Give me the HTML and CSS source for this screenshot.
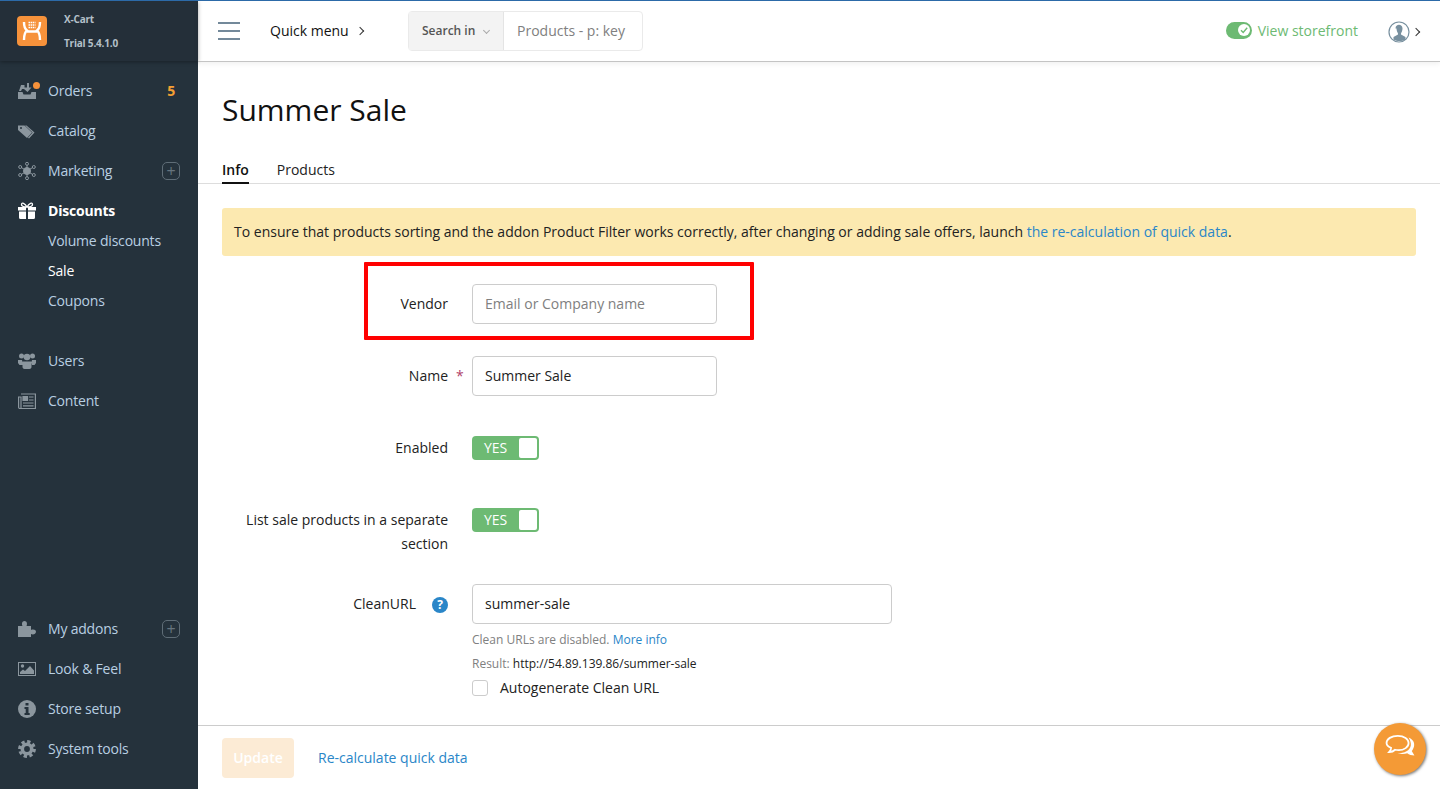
FILE: index.html
```html
<!DOCTYPE html>
<html lang="en">
<head>
<meta charset="UTF-8" />
<title>Summer Sale - X-Cart</title>
<link rel="stylesheet" href="styles.css">
</head>
<body>

<!-- Sidebar -->
<aside class="sidebar">
  <div class="brand">
    <div class="brand-logo">
      <svg width="20" height="20" viewBox="0 0 20 20" fill="none" stroke="#fff" stroke-width="2.400">
        <path d="M2 1c0 5 1 7 3 8.500c-2 1.500-3 3.500-3 9.500M18 1c0 5-1 7-3 8.500c2 1.500 3 3.500 3 9.500M5 10.500h10"/>
        <path d="M6.500 1.500h7M6.500 4h7M6.500 6.500h7" stroke-width="1.500" stroke-dasharray="1.500 .6"/>
      </svg>
    </div>
    <div class="brand-text">
      <div>X-Cart</div>
      <div>Trial 5.4.1.0</div>
    </div>
  </div>

  <nav class="nav">
    <a class="nav-item">
      <svg class="nav-icon" viewBox="0 0 18 18" fill="#8b969e"><path d="M0 10h4.500l1 2.500h7l1-2.500H18v7H0z"/><path d="M1 9l2-6h3.500v2.500H9V1h2v4.500h2.500L9.500 10 6 7H4L3 9z"/></svg>
      <span class="order-dot"></span>
      <span class="nav-label">Orders</span>
      <span class="nav-count">5</span>
    </a>
    <a class="nav-item">
      <svg class="nav-icon" viewBox="0 0 18 18" fill="#8b969e"><path d="M0 3.500h6.500L14 10.500l-5 5.500L0 8z"/><path d="M8.500 3.500L16.500 10.500 11 16.500l-1-.8 4.600-5.200L7 3.500z" /><circle cx="3" cy="6" r="1" fill="#25323c"/></svg>
      <span class="nav-label">Catalog</span>
    </a>
    <a class="nav-item">
      <svg class="nav-icon" viewBox="0 0 18 18" fill="none" stroke="#8b969e" stroke-width="1"><circle cx="9" cy="9" r="3.500" fill="#8b969e"/><path d="M9 2v14M2.500 5l13 8M15.500 5l-13 8"/><g fill="#25323c"><circle cx="9" cy="1.800" r="1.500"/><circle cx="9" cy="16.200" r="1.500"/><circle cx="2.200" cy="5" r="1.500"/><circle cx="15.800" cy="5" r="1.500"/><circle cx="2.200" cy="13" r="1.500"/><circle cx="15.800" cy="13" r="1.500"/></g></svg>
      <span class="nav-label">Marketing</span>
      <span class="nav-plus">+</span>
    </a>
    <a class="nav-item nav-item-active">
      <svg class="nav-icon" viewBox="0 0 18 18" fill="#fff"><path d="M0 5h8v3.500H0zM10 5h8v3.500h-8zM1 9.500h7V17H2.500A1.500 1.500 0 0 1 1 15.500zM10 9.500h7v6a1.500 1.500 0 0 1-1.500 1.500H10z"/><path d="M9 5C7 1 3.500 0 3.500 2.500S6 5 9 5C12 5 14.500 5 14.500 2.500S11 1 9 5z" fill="none" stroke="#fff" stroke-width="1.300"/></svg>
      <span class="nav-label">Discounts</span>
    </a>
    <a class="nav-sub">Volume discounts</a>
    <a class="nav-sub nav-sub-current">Sale</a>
    <a class="nav-sub">Coupons</a>
    <a class="nav-item nav-item-gap">
      <svg class="nav-icon" viewBox="0 0 18 18" fill="#8b969e"><circle cx="3.500" cy="4" r="2.500"/><circle cx="14.500" cy="4" r="2.500"/><circle cx="9" cy="5" r="3.300"/><path d="M0 8h4l1 5H1.500L0 11zM18 8h-4l-1 5h3.500L18 11zM4.500 9.500h9V15c0 1-1 2-2 2h-5c-1 0-2-1-2-2z"/></svg>
      <span class="nav-label">Users</span>
    </a>
    <a class="nav-item">
      <svg class="nav-icon" viewBox="0 0 18 18" fill="none" stroke="#8b969e" stroke-width="1.200"><path d="M3 2h14.400v14.500H2A1.400 1.400 0 0 1 .6 15V5H3v11"/><path d="M5 4.500h4.500v4H5z" fill="#8b969e"/><path d="M11 5h4.500M11 8h4.500M5 11h10.500M5 13.800h10.500"/></svg>
      <span class="nav-label">Content</span>
    </a>
  </nav>

  <nav class="nav nav-bottom">
    <a class="nav-item">
      <svg class="nav-icon" viewBox="0 0 18 18" fill="#8b969e"><path d="M0 6h4.500C3.500 4 4 1 6.500 1S9.500 4 8.500 6H13v4c2-1 5-.5 5 1.800S15 15 13 14v3H0z"/></svg>
      <span class="nav-label">My addons</span>
      <span class="nav-plus">+</span>
    </a>
    <a class="nav-item">
      <svg class="nav-icon" viewBox="0 0 18 18" fill="#8b969e"><path d="M0 2h18v14H0zM1 3v12h16V3z"/><circle cx="4.500" cy="6" r="1.700"/><path d="M2 14v-2l3-2.500 2 1.500 5-5 4 4.500V14z"/></svg>
      <span class="nav-label">Look &amp; Feel</span>
    </a>
    <a class="nav-item">
      <svg class="nav-icon" viewBox="0 0 18 18"><circle cx="9" cy="9" r="9" fill="#8b969e"/><path d="M7.500 3h3v2.500h-3zM6.500 7h4v6h1.200v2H6.500v-2h1.200V9H6.500z" fill="#25323c"/></svg>
      <span class="nav-label">Store setup</span>
    </a>
    <a class="nav-item">
      <svg class="nav-icon" viewBox="0 0 18 18" fill="none" stroke="#8b969e"><circle cx="9" cy="9" r="4.700" stroke-width="3.600"/><circle cx="9" cy="9" r="7.400" stroke-width="3" stroke-dasharray="3.300 2.500"/></svg>
      <span class="nav-label">System tools</span>
    </a>
  </nav>
</aside>

<div class="main">
  <!-- Top bar -->
  <header class="topbar">
    <div class="burger"><span></span><span></span><span></span></div>
    <span class="quick-menu">Quick menu<i class="chevron chevron-dark"></i></span>
    <div class="search">
      <div class="search-in">Search in<i class="chevron-down"></i></div>
      <div class="search-box">Products - p: key</div>
    </div>
    <div class="topbar-right">
      <span class="store-switch"><svg width="12" height="12" viewBox="0 0 12 12" fill="none" stroke="#6dba73" stroke-width="1.400"><path d="M3 6.200l2.200 2.200L9.200 3.800"/></svg></span>
      <a class="storefront">View storefront</a>
      <svg class="avatar" width="22" height="22" viewBox="0 0 22 22"><circle cx="11" cy="11" r="10" fill="#fff" stroke="#78909f" stroke-width="1.200"/><path d="M7.500 7.500c0-5 7-5 7 0c0 2-1 4-1.500 5v1l4.500 2.500v2.500c-3.500 2-8.500 2-12 0V16l4.500-2.500v-1c-.5-1-1.500-3-1.500-5z" fill="#78909f"/></svg>
      <i class="chevron chevron-dark"></i>
    </div>
  </header>

  <div class="content">
    <h1 class="page-title">Summer Sale</h1>
    <div class="tabs">
      <a class="tab tab-active">Info</a>
      <a class="tab">Products</a>
    </div>

    <div class="page-body">
      <div class="notice">To ensure that products sorting and the addon Product Filter works correctly, after changing or adding sale offers, launch <a class="link">the re-calculation of quick data</a>.</div>

      <form class="form">
        <div class="form-row form-row-marked">
          <span class="marker"></span>
          <label class="form-label">Vendor</label>
          <div class="input input-placeholder">Email or Company name</div>
        </div>
        <div class="form-row">
          <label class="form-label">Name<span class="required">*</span></label>
          <div class="input">Summer Sale</div>
        </div>
        <div class="form-row">
          <label class="form-label">Enabled</label>
          <div class="toggle"><span class="toggle-text">YES</span><span class="toggle-knob"></span></div>
        </div>
        <div class="form-row form-row-tall">
          <label class="form-label">List sale products in a separate section</label>
          <div class="toggle"><span class="toggle-text">YES</span><span class="toggle-knob"></span></div>
        </div>
        <div class="form-row form-row-last">
          <label class="form-label form-label-help">CleanURL<span class="help">?</span></label>
          <div class="url-field">
            <div class="input input-wide">summer-sale</div>
            <div class="hint hint-first">Clean URLs are disabled. <a class="link">More info</a></div>
            <div class="hint">Result: <span class="hint-url">http://54.89.139.86/summer-sale</span></div>
            <div class="check-row"><span class="checkbox"></span>Autogenerate Clean URL</div>
          </div>
        </div>
      </form>
    </div>
  </div>

  <footer class="footer">
    <button class="btn-update" type="button">Update</button>
    <a class="link footer-link">Re-calculate quick data</a>
  </footer>
</div>

<!-- Chat launcher -->
<div class="chat">
  <svg width="33" height="27" viewBox="0 0 36 30">
    <path d="M27 4c5 2 7 6 6 10c-.5 2-1.500 4-2.500 5l3 5c-3 0-6-1-8-2.500c-3 1-7 1-11 0c8 0 14-3 15-9c.3-3-1-6-2.500-8.500z" fill="#fff"/>
    <path d="M15 2c7 0 12 3.500 12 8s-5 8-11 8c-1.500 0-3-.2-4-.5c-1.500 1.500-4 2.500-6.500 2.500c1-1 2-2.500 2-4.500C4 14 2.500 12 2.500 10C2.500 5.500 8 2 15 2z" fill="#f49a36" stroke="#fff" stroke-width="2"/>
  </svg>
</div>

</body>
</html>
```

FILE: styles.css
```css
/* --- Reset & base --- */
* {
  box-sizing: border-box;
}
html, body {
  height: 100%;
}
body {
  margin: 0;
  display: flex;
  overflow: hidden;
  border-top: 1px solid #2c6aa8;
  font-family: "Open Sans", "Liberation Sans", sans-serif;
  font-size: 14px;
  line-height: 24px;
  color: #222;
  background: #fff;
}
.link {
  color: #2a86c8;
}

/* --- Sidebar --- */
.sidebar {
  width: 198px;
  flex: none;
  display: flex;
  flex-direction: column;
  background: #25323c;
  color: #b9cfe2;
  letter-spacing: -0.2px;
}
.brand {
  height: 60px;
  display: flex;
  align-items: center;
  gap: 17px;
  padding: 0 17px 0;
  background: #242f39;
  box-shadow: 0 1px 4px rgba(0, 0, 0, 0.35);
}
.brand-logo {
  width: 30px;
  height: 30px;
  display: flex;
  align-items: center;
  justify-content: center;
  border-radius: 4px;
  background: #f6923b;
}
.brand-text {
  font-size: 10px;
  font-weight: 700;
  line-height: 24px;
  color: #b4c0c9;
}
.nav {
  padding-top: 10px;
}
.nav-bottom {
  margin-top: auto;
  padding: 0 0 20px;
}
.nav-item {
  position: relative;
  height: 40px;
  display: flex;
  align-items: center;
  padding: 0 18px;
}
.nav-item-gap {
  margin-top: 25px;
}
.nav-item-active {
  margin-bottom: -5px;
  color: #fff;
  font-weight: 700;
}
.nav-icon {
  width: 18px;
  height: 18px;
  flex: none;
}
.nav-label {
  margin-left: 12px;
}
.order-dot {
  position: absolute;
  left: 33px;
  top: 11px;
  width: 7px;
  height: 7px;
  border-radius: 50%;
  background: #f6923b;
}
.nav-count {
  margin-left: auto;
  margin-right: 5px;
  font-weight: 700;
  color: #f5a033;
}
.nav-plus {
  margin-left: auto;
  width: 18px;
  height: 18px;
  display: flex;
  align-items: center;
  justify-content: center;
  border: 1px solid #5f6d77;
  border-radius: 5px;
  font-size: 16px;
  line-height: 1;
  color: #66747e;
}
.nav-sub {
  display: block;
  height: 30px;
  padding-left: 48px;
  line-height: 30px;
}
.nav-sub-current {
  color: #fff;
}

/* --- Main column --- */
.main {
  flex: 1;
  min-width: 0;
  display: flex;
  flex-direction: column;
}
.topbar {
  position: relative;
  height: 61px;
  flex: none;
  display: flex;
  align-items: center;
  padding-left: 20px;
  border-bottom: 1px solid #c4c4c4;
  box-shadow: 0 2px 5px rgba(0, 0, 0, 0.06);
}
.burger {
  width: 22px;
  display: flex;
  flex-direction: column;
  gap: 6px;
}
.burger span {
  height: 2px;
  background: #73899a;
}
.quick-menu {
  margin-left: 30px;
  width: 138px;
  display: flex;
  align-items: center;
  color: #111;
}
.chevron {
  width: 6px;
  height: 6px;
  margin-left: 8px;
  border-top: 1.200px solid #333;
  border-right: 1.200px solid #333;
  transform: rotate(45deg);
}
.search {
  width: 235px;
  height: 40px;
  display: flex;
  border: 1px solid #eaeaea;
  border-radius: 4px;
}
.search-in {
  width: 95px;
  display: flex;
  align-items: center;
  padding-left: 13px;
  background: #f3f3f3;
  border-right: 1px solid #e4e4e4;
  font-size: 12px;
  font-weight: 600;
  color: #555;
}
.chevron-down {
  width: 5px;
  height: 5px;
  margin: -2px 0 0 9px;
  border-right: 1px solid #aaa;
  border-bottom: 1px solid #aaa;
  transform: rotate(45deg);
}
.search-box {
  padding: 7px 13px;
  color: #808080;
}
.topbar-right {
  margin-left: auto;
  padding-right: 21px;
  display: flex;
  align-items: center;
}
.store-switch {
  width: 26px;
  height: 17px;
  display: flex;
  align-items: center;
  justify-content: flex-end;
  padding-right: 2px;
  margin-top: -2px;
  border-radius: 9px;
  background: #6dba73;
}
.store-switch svg {
  background: #fff;
  border-radius: 50%;
}
.storefront {
  margin: 0 0 0 6px;
  color: #6dba73;
}
.avatar {
  margin: 2px 0 0 30px;
}
.topbar-right .chevron {
  margin: 2px 0 0 3px;
}

/* --- Content --- */
.content {
  flex: 1;
  min-height: 0;
}
.page-title {
  margin: 28px 0 0 24px;
  font-size: 30px;
  font-weight: 400;
  line-height: 40px;
  color: #111;
}
.tabs {
  display: flex;
  gap: 28px;
  height: 28px;
  margin-top: 26px;
  padding-left: 24px;
  border-bottom: 1px solid #ddd;
}
.tab {
  height: 28px;
  line-height: 28px;
  color: #222;
}
.tab-active {
  font-weight: 600;
  border-bottom: 2px solid #111;
  color: #111;
}
.page-body {
  padding: 24px 24px 0;
}
.notice {
  height: 48px;
  padding: 12px;
  border-radius: 3px;
  background: #fce9b0;
  color: #222;
}

/* --- Form --- */
.form {
  margin-top: 28px;
}
.form-row {
  position: relative;
  display: flex;
  gap: 24px;
  min-height: 40px;
  margin-bottom: 32px;
}
.form-row-tall {
  margin-bottom: 28px;
}
.form-row-last {
  margin-bottom: 0;
}
.marker {
  position: absolute;
  left: 142px;
  top: -22px;
  width: 390px;
  height: 78px;
  border: 4px solid #f00;
  border-radius: 1px;
  pointer-events: none;
}
.form-label {
  position: relative;
  width: 226px;
  flex: none;
  padding-top: 8px;
  text-align: right;
  color: #222;
}
.required {
  position: absolute;
  left: 234px;
  top: 8px;
  color: #b0416a;
}
.form-label-help {
  padding-right: 32px;
}
.help {
  position: absolute;
  right: 0;
  top: 13px;
  width: 16px;
  height: 16px;
  border-radius: 50%;
  background: #2a86c8;
  color: #fff;
  font-size: 12px;
  font-weight: 700;
  line-height: 16px;
  text-align: center;
}
.input {
  width: 245px;
  height: 40px;
  padding: 7px 12px;
  border: 1px solid #ccc;
  border-radius: 4px;
  background: #fff;
  color: #222;
}
.input-placeholder {
  color: #808080;
}
.input-wide {
  width: 420px;
}
.toggle {
  width: 67px;
  height: 24px;
  margin-top: 8px;
  display: flex;
  align-items: center;
  justify-content: space-between;
  padding: 2px;
  border-radius: 4px;
  background: #6dba73;
}
.toggle-text {
  padding-left: 10px;
  color: #fff;
}
.toggle-knob {
  width: 18px;
  height: 20px;
  border-radius: 2px;
  background: #fff;
}
.hint {
  font-size: 12px;
  color: #808080;
}
.hint-first {
  margin-top: 4px;
}
.hint-url {
  color: #222;
}
.check-row {
  display: flex;
  align-items: center;
  gap: 12px;
  color: #222;
}
.checkbox {
  width: 16px;
  height: 16px;
  border: 1px solid #ccc;
  border-radius: 3px;
}

/* --- Footer --- */
.footer {
  height: 64px;
  flex: none;
  display: flex;
  align-items: center;
  gap: 24px;
  padding: 0 24px;
  border-top: 1px solid #ccc;
  background: #fff;
}
.btn-update {
  width: 72px;
  height: 40px;
  border: none;
  border-radius: 4px;
  background: #fcebd5;
  color: #fff;
  font-family: inherit;
  font-size: 14px;
  font-weight: 600;
}

/* --- Chat --- */
.chat {
  position: fixed;
  left: 1374px;
  top: 723px;
  width: 52px;
  height: 52px;
  display: flex;
  align-items: center;
  justify-content: center;
  padding-bottom: 3px;
  border-radius: 50%;
  background: #f49a36;
  box-shadow: 1px 1px 3px rgba(0, 0, 0, 0.55);
}
```
